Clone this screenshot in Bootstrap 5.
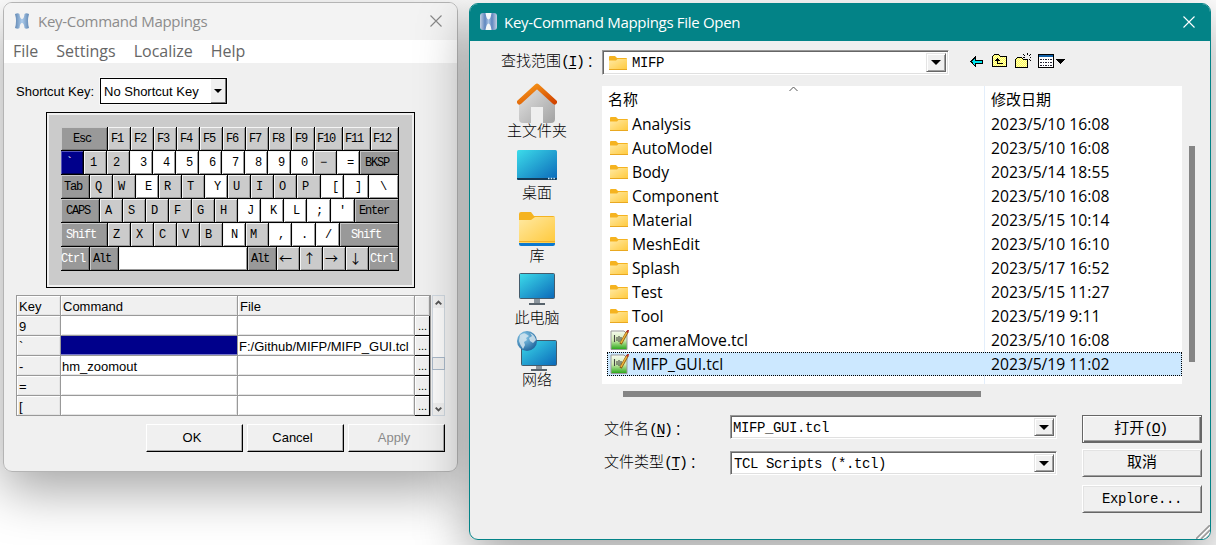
<!DOCTYPE html>
<html lang="zh-CN">
<head>
<meta charset="utf-8">
<meta name="viewport" content="width=device-width, initial-scale=1">
<title>Key-Command Mappings</title>
<link href="https://cdn.jsdelivr.net/npm/bootstrap@5.3.0/dist/css/bootstrap.min.css" rel="stylesheet">
<style>
*{box-sizing:border-box}
body{width:1216px;height:545px;overflow:hidden;background:#fff;color:#000;line-height:1.2}
svg{display:block;flex:none}
.segoe{font-family:"Open Sans","Noto Sans CJK SC",sans-serif}
.arial{font-family:"Liberation Sans",Arial,sans-serif;font-size:13px}
.song{font-family:"Liberation Mono","Noto Sans CJK SC",monospace;font-size:15px;font-weight:300}
.mono{font-family:"Liberation Mono",monospace;font-size:14px;letter-spacing:-.4px}
.win{border-radius:9px;overflow:hidden;background:#f0f0f0;flex:none}
.wrap1,.wrap2{border-radius:9px;box-shadow:0 18px 52px rgba(0,0,0,.36);flex:none}
.wrap1{margin:2px 0 0 3px;height:470px}
.wrap2{margin:3px 0 0 11px;height:537px}
.win1{width:455px;height:470px;border:1px solid #b4b4b4}
.win2{width:742px;height:537px;border:1px solid #038387;background:#efefef}
.title1{height:37px;background:#f3f3f3;color:#8c8c8c;font-size:15px;letter-spacing:-.3px;padding:0 15px 2px 11px}
.title2{height:37px;background:#038387;color:#fff;font-size:15px;letter-spacing:-.3px;padding:0 15px 2px 10px}
.menu{height:23px;background:#fff;color:#666;font-size:16px;padding-left:9px;gap:18px}
.short{height:26px;margin:15px 0 0 12px}
.pick{width:127px;height:26px;border:1px solid #000;background:#fff;outline:1px solid #f8f8f8}
.pick i{width:15px;height:24px;background:#f0f0f0;border-right:1px solid #777;border-bottom:1px solid #777}
.tri{width:0;height:0;border:4px solid transparent;border-top-color:#000;border-bottom:0}
.board{width:369px;height:176px;margin:8px 0 0 42px;border:1px solid #000;background:#cbcbcb;box-shadow:inset 0 0 0 2px #f0f0f0;padding:14px 0 0 14px}
.krow{height:24px;width:338px}
.key{height:24px;flex:none;overflow:hidden;background:#cbcbcb;border-right:1px solid #000;border-bottom:1px solid #000;box-shadow:inset 1px 1px #f4f4f4,inset -1px -1px #999;font-family:"Liberation Mono",monospace;font-size:12px;letter-spacing:-1.2px;line-height:25px;white-space:pre;text-align:left}
.key.w{background:#fff}.key.d{background:#999;box-shadow:inset 1px 1px #c9c9c9,inset -1px -1px #777}
.key.b{background:#00008b;color:#fff;box-shadow:inset 1px 1px #5555bb,inset -1px -1px #000050}
.key.s{color:#fff}
.key.a{font-family:"Noto Sans CJK SC",sans-serif;font-size:13px;letter-spacing:0;line-height:21px}
.grid5{width:415px;height:121px;border:1px solid #999;display:grid;grid-template-columns:44px 177px 177px 15px;grid-template-rows:20px repeat(5,20px);line-height:21px}
.grid5>div{border-right:1px solid #999;border-bottom:1px solid #999;box-shadow:inset 1px 1px #fff,inset -1px -1px #e4e4e4;padding-left:2px;white-space:nowrap;overflow:hidden}
.grid5 .c{background:#fff;padding-left:1px}
.grid5 .sel{background:#00008b;box-shadow:inset 0 -1px #7777cc}
.grid5 .dots{border-color:#000;padding-left:3px;font-size:11px}
.sb{width:13px;height:121px;border:1px solid #d0d8e0;background:#fbfbfb}
.sb .e{height:12px;background:#f0f0f0}
.sb .thumb{height:13px;border:1px solid #a9b8c8;background:#f0f0f0;width:13px;margin-left:-1px}
.push{width:97px;height:28px;border:1px solid #fff;border-right:1px solid #000;border-bottom:1px solid #000;box-shadow:inset -1px -1px #aaa;background:#f0f0f0;padding:0 0 1px;border-radius:0;color:#000}
.combo{border:1px solid #999;border-right-color:#fff;border-bottom-color:#fff;box-shadow:inset 1px 1px #666,inset -1px -1px #e0e0e0;background:#fff;padding:2px}
.combo .mono{padding-top:2px}
.combo i{width:20px;align-self:stretch;background:#f0f0f0;border:1px solid #e4e4e4;border-right-color:#666;border-bottom-color:#666;box-shadow:inset 1px 1px #fff,inset -1px -1px #a0a0a0}
.tri5{width:0;height:0;border:5px solid transparent;border-top-color:#000;border-bottom:0}
.look{height:25px;margin-top:9px;padding-left:31px}
.side{width:134px;line-height:16px}
.side span{transform:translateY(2px)}
.lt{letter-spacing:-1.5px;margin-right:3px}
.list{width:580px;height:298px;background:#fff;font-size:15px}
.lrow{height:24px;padding-left:8px;font-size:15.7px}
.lrow .nm{width:359px;white-space:nowrap}
.names{width:383px;height:298px;border-right:1px solid #e3eefb;padding:4px 0 0 6px}
.on{background:#cce8ff;margin-left:5px;padding-left:3px;outline:1px dotted #000;outline-offset:-1px}
.vsb{width:6px;height:216px;background:#858585;margin:71px 0 0 7px}
.hsb{width:358px;height:6px;background:#858585;margin:7px 0 0 153px}
.frow{height:24px}
.lab{width:126px}
.wbtn{width:120px;height:28px;border:1px solid #fff;border-right-color:#666;border-bottom-color:#666;box-shadow:inset 1px 1px #e3e3e3,inset -1px -1px #a0a0a0;background:#f0f0f0;color:#000;padding:1px 0 0;border-radius:0}
.wbtn.def{border-color:#666;box-shadow:inset 1px 1px #fff,inset -1px -1px #666,inset -2px -2px #a0a0a0}
u{text-underline-offset:2px;text-decoration-thickness:1px}
</style>
</head>
<body>
<svg width="0" height="0" class="position-absolute">
<defs>
<linearGradient id="gf" x1="0" y1="0" x2="1" y2="1"><stop stop-color="#ffe9a3"/><stop offset="1" stop-color="#ffc93b"/></linearGradient>
<linearGradient id="gs" x1="0" y1="0" x2="1" y2="1"><stop stop-color="#3cdcea"/><stop offset="1" stop-color="#0b68b9"/></linearGradient>
<linearGradient id="gh" x1="0" y1="0" x2="1" y2="1"><stop stop-color="#e6e6e6"/><stop offset="1" stop-color="#a2a2a2"/></linearGradient>
<linearGradient id="gr" x1="0" y1="0" x2="1" y2="1"><stop stop-color="#f99d1c"/><stop offset="1" stop-color="#d24500"/></linearGradient>
<linearGradient id="gg" x1="0" y1="0" x2="0" y2="1"><stop stop-color="#f6faf0"/><stop offset=".5" stop-color="#d0ecb0"/><stop offset="1" stop-color="#25a515"/></linearGradient>
<radialGradient id="gw" cx=".35" cy=".3" r=".8"><stop stop-color="#8fd0ee"/><stop offset="1" stop-color="#175c96"/></radialGradient>
<linearGradient id="gx" x1="0" y1="0" x2="1" y2="0"><stop stop-color="#3f6fa5"/><stop offset=".5" stop-color="#9dc3ea"/><stop offset="1" stop-color="#3f6fa5"/></linearGradient>
<linearGradient id="gy" x1="0" y1="0" x2="1" y2="0"><stop stop-color="#c3cfe2"/><stop offset=".3" stop-color="#5f86bf"/><stop offset=".5" stop-color="#a9c4e6"/><stop offset=".7" stop-color="#5f86bf"/><stop offset="1" stop-color="#c3cfe2"/></linearGradient>
<pattern id="dy" width="2" height="2" patternUnits="userSpaceOnUse"><rect width="2" height="2" fill="#ffff50"/><rect width="1" height="1" fill="#fffbc0"/><rect x="1" y="1" width="1" height="1" fill="#fffbc0"/></pattern>
<symbol id="folder" viewBox="0 0 18 14"><path d="M0 1Q0 0 1 0H6L8 2H17Q18 2 18 3V6H0Z" fill="#f5b320"/><path d="M0 4.500H7L8.500 3H18V13Q18 14 17 14H1Q0 14 0 13Z" fill="url(#gf)"/><path d="M0 13.500H18" stroke="#e9a820"/></symbol>
<symbol id="tcl" viewBox="0 0 19 20"><path d="M1 1H14L17 4V19.500H1Z" fill="url(#gg)" stroke="#999"/><path d="M4.500 5V12M7 7V11M9 6V12M11 7V11" fill="none" stroke="#444" stroke-width="1.100"/><path d="M17.500 1.500L10.500 14" stroke="#8a5a10" stroke-width="2.600"/><path d="M17 2L11 13" stroke="#f0b43c" stroke-width="1.500"/><path d="M18.500 0L17 2.500" stroke="#b0312a" stroke-width="2"/></symbol>
</defs></svg>

<main class="d-flex align-items-start">
<section class="wrap1"><div class="win win1 d-flex flex-column">
  <header class="title1 segoe d-flex align-items-center">
    <svg width="14" height="16" viewBox="0 0 14 16"><path d="M0 1Q3-.5 4.500 1Q5 6 7 6T9.500 1Q11-.5 14 1Q12 8 14 15Q11 16.500 9.500 15Q9 10 7 10T4.500 15Q3 16.500 0 15Q2 8 0 1Z" fill="url(#gx)" opacity=".8"/></svg>
    <span style="margin-left:9px">Key-Command Mappings</span>
    <svg class="ms-auto" width="12" height="12" viewBox="0 0 12 12"><path d="M.5.5L11.500 11.500M11.500.5L.5 11.500" stroke="#888" stroke-width="1.100"/></svg>
  </header>
  <nav class="menu segoe d-flex align-items-center"><span>File</span><span>Settings</span><span>Localize</span><span>Help</span></nav>
  <div class="short arial d-flex align-items-center"><span style="width:84px;padding-top:1px">Shortcut Key:</span>
    <div class="pick d-flex align-items-center justify-content-between"><span style="padding:2px 0 0 3px">No Shortcut Key</span><i class="d-flex align-items-center justify-content-center"><b class="tri"></b></i></div></div>
  <div class="board" id="board"></div>
  <div class="d-flex arial" style="margin:7px 0 0 12px;gap:1px">
    <div class="grid5">
      <div>Key</div><div>Command</div><div>File</div><div></div>
      <div>9</div><div class="c"></div><div class="c"></div><div class="dots">...</div>
      <div>`</div><div class="c sel"></div><div class="c">F:/Github/MIFP/MIFP_GUI.tcl</div><div class="dots">...</div>
      <div>-</div><div class="c">hm_zoomout</div><div class="c"></div><div class="dots">...</div>
      <div>=</div><div class="c"></div><div class="c"></div><div class="dots">...</div>
      <div>[</div><div class="c"></div><div class="c"></div><div class="dots">...</div>
    </div>
    <div class="sb d-flex flex-column">
      <div class="e d-flex align-items-center justify-content-center"><svg width="7" height="5" viewBox="0 0 7 5"><path d="M.7 4.300L3.500 1.500L6.300 4.300" fill="none" stroke="#555" stroke-width="1.900"/></svg></div>
      <div class="thumb" style="margin-top:49px"></div>
      <div class="e mt-auto d-flex align-items-center justify-content-center"><svg width="7" height="5" viewBox="0 0 7 5"><path d="M.7.7L3.500 3.500L6.300.7" fill="none" stroke="#555" stroke-width="1.900"/></svg></div>
    </div>
  </div>
  <div class="d-flex arial" style="margin:8px 0 0 142px;gap:4px">
    <button class="push" style="padding-right:5px">OK</button><button class="push" style="padding-right:6px">Cancel</button><button class="push" style="color:#8a8a8a;padding-right:5px">Apply</button>
  </div>
</div></section>

<section class="wrap2"><div class="win win2 position-relative">
  <header class="title2 segoe d-flex align-items-center">
    <svg width="17" height="17" viewBox="0 0 17 17"><rect width="17" height="17" rx="3" fill="url(#gy)"/><path d="M5.500 0Q6.500 6.500 8.500 6.500T11.500 0ZM5.500 17Q6.500 10.500 8.500 10.500T11.500 17Z" fill="#f3f6f8"/></svg>
    <span style="margin-left:7px">Key-Command Mappings File Open</span>
    <svg class="ms-auto" width="12" height="12" viewBox="0 0 12 12"><path d="M.5.5L11.500 11.500M11.500.5L.5 11.500" stroke="#fff" stroke-width="1.100"/></svg>
  </header>
  <div class="look d-flex align-items-center">
    <span class="song text-nowrap" style="width:101px">查找范围<span class="lt">(<u>I</u>)</span>：</span>
    <div class="combo d-flex align-items-center" style="width:347px;height:25px"><svg width="18" height="14" style="margin-left:4px"><use href="#folder"/></svg><span class="mono flex-fill" style="margin-left:5px">MIFP</span><i class="d-flex align-items-center justify-content-center"><b class="tri5"></b></i></div>
    <svg width="96" height="20" viewBox="0 0 96 20" style="margin:-1px 0 0 21px" shape-rendering="crispEdges">
      <path d="M1 9.500L5.500 5V8H12.500V11.500H5.500V14.500Z" fill="#00e5ee" stroke="#000"/>
      <path d="M22.500 4.500L24.500 2.500H28.500L30.500 4.500H36.500V14.500H22.500Z" fill="url(#dy)" stroke="#000"/><path d="M27.500 12V6M25 8.500H30M26 7.500H29M27.500 11.500H33" stroke="#000" fill="none"/>
      <path d="M45.500 7.500L47.500 5.500H51.500L53.500 7.500H57.500V15.500H45.500Z" fill="url(#dy)" stroke="#000"/><path d="M57.500 1V3M57.500 7V9M53 2L55 4M61 2L59 4M53 5.500H55M59.500 5.500H61M59 7L61 9" stroke="#000" fill="none"/>
      <rect x="68.500" y="2.500" width="15" height="13" fill="#fff" stroke="#000"/><rect x="69" y="3" width="14" height="2" fill="#1060a8"/><path d="M70 7.500H82M70 10.500H82M70 13.500H82" stroke="#223" stroke-width="1" stroke-dasharray="2 1 1 1"/>
      <path d="M86 7H95L90.500 12Z" fill="#000"/>
    </svg>
  </div>
  <div class="d-flex" style="height:309px">
    <div class="side song d-flex flex-column align-items-center text-nowrap">
      <svg width="40" height="40" viewBox="0 0 40 40" style="margin-top:8px"><path d="M2 18L20 3L38 18V36Q38 40 34 40H26V24H14V40H6Q2 40 2 36Z" fill="url(#gh)"/><path d="M14 40V26Q14 24 16 24H24Q26 24 26 26V40Z" fill="#efefef"/><path d="M2.500 19L20 3L37.500 19" fill="none" stroke="url(#gr)" stroke-width="5" stroke-linecap="round" stroke-linejoin="round"/></svg>
      <span>主文件夹</span>
      <svg width="40" height="30" viewBox="0 0 40 30" style="margin-top:11px"><rect width="40" height="30" rx="1.500" fill="url(#gs)"/><path d="M0 28H40V28.500Q40 30 38.500 30H1.500Q0 30 0 28.500Z" fill="#153b58"/><path d="M31 28.500H38" stroke="#c8eaff" stroke-width="1.500" stroke-dasharray="1.500 1.200"/></svg>
      <span style="margin-top:5px">桌面</span>
      <svg width="36" height="34" viewBox="0 0 36 34" style="margin-top:11px"><path d="M0 2Q0 0 2 0H12L15 4H34Q36 4 36 6V10H0Z" fill="#f5b320"/><path d="M0 8H12L16 5H36V31H0Z" fill="url(#gf)"/><path d="M0 29.500H36" stroke="#efb02b"/><path d="M0 31H36V32Q36 34 34 34H2Q0 34 0 32Z" fill="#0b78cf"/></svg>
      <span style="margin-top:2px">库</span>
      <svg width="36" height="32" viewBox="0 0 36 32" style="margin-top:9px"><rect x=".5" y=".5" width="35" height="25" rx="1" fill="url(#gs)" stroke="#455b6b"/><path d="M15 26H21V30H15Z" fill="#8b959d"/><path d="M10 31H26" stroke="#58636c" stroke-width="2"/></svg>
      <span style="margin-top:5px">此电脑</span>
      <svg width="40" height="40" viewBox="0 0 40 40" style="margin-top:5px"><rect x="4.500" y="9.500" width="35" height="25" rx="1" fill="url(#gs)" stroke="#455b6b"/><path d="M19 35H25V38H19Z" fill="#8b959d"/><path d="M14 39H30" stroke="#58636c" stroke-width="2"/><circle cx="10" cy="10" r="10" fill="url(#gw)"/><path d="M3 4Q7 1 9 3L12 5L9 7L10 9L7 11L8 14L6 18Q3 14 2 10ZM13 2Q18 4 19 9L16 12L13 10L12 7L15 5Z" fill="#d4e4ed" opacity=".85"/></svg>
      <span style="margin-top:1px">网络</span>
    </div>
    <div style="margin:11px 0 0 -2px">
      <div class="list segoe position-relative">
        <svg class="position-absolute" width="9" height="6" viewBox="0 0 9 6" style="left:187px;top:0"><path d="M.5 5L4.500 1L8.500 5" fill="none" stroke="#555"/></svg>
        <div class="d-flex" style="height:26px"><div class="names">名称</div><div style="padding:4px 0 0 6px">修改日期</div></div>
        <div id="rows" class="position-relative"></div>
      </div>
    </div>
    <div class="vsb"></div>
  </div>
  <div class="hsb"></div>
  <div class="d-flex" style="margin:18px 0 0 134px">
    <div class="d-flex flex-column" style="gap:12px">
      <div class="frow d-flex align-items-center"><span class="lab song" style="padding-top:8px">文件名<span class="lt">(<u>N</u>)</span>：</span><div class="combo d-flex align-items-center" style="width:327px;height:24px"><span class="mono flex-fill">MIFP_GUI.tcl</span><i class="d-flex align-items-center justify-content-center"><b class="tri5"></b></i></div></div>
      <div class="frow d-flex align-items-center"><span class="lab song" style="padding-top:1px">文件类型<span class="lt">(<u>T</u>)</span>：</span><div class="combo d-flex align-items-center" style="width:327px;height:24px"><span class="mono flex-fill" style="padding-left:1px">TCL Scripts (*.tcl)</span><i class="d-flex align-items-center justify-content-center"><b class="tri5"></b></i></div></div>
    </div>
    <div class="d-flex flex-column song" style="margin-left:25px;gap:6px"><button class="wbtn def">打开<span class="lt">(<u>O</u>)</span></button><button class="wbtn">取消</button><button class="wbtn mono" style="margin-top:2px">Explore...</button></div>
  </div>
  <svg class="position-absolute bottom-0 end-0" width="14" height="14" viewBox="0 0 14 14"><path d="M0 14L14 0M5 14L14 5M10 14L14 10" stroke="#999" stroke-width="1.600"/><path d="M2 14L14 2M7 14L14 7" stroke="#fff"/></svg>
</div></section>
</main>
<script src="https://cdn.jsdelivr.net/npm/bootstrap@5.3.0/dist/js/bootstrap.bundle.min.js"></script>
<script>
// Each key: label, right edge on the board, text indent, colour class
const keys = [
 [["Esc",108,12,"d"],["F1",131,3],["F2",154,3],["F3",177,3],["F4",200,3],["F5",223,3],["F6",246,3],["F7",269,3],["F8",292,3],["F9",315,3],["F10",343,2],["F11",371,2],["F12",399,2]],
 [["`",84,5,"b"],["1",107,6],["2",130,6],["3",153,10,"w"],["4",176,10,"w"],["5",199,10,"w"],["6",222,10,"w"],["7",245,10,"w"],["8",268,10,"w"],["9",291,10,"w"],["0",314,10,"w"],["−",337,6],["=",360,10,"w"],["BKSP",399,5,"d"]],
 [["Tab",90,3,"d"],["Q",113,5],["W",136,5],["E",159,9,"w"],["R",182,5],["T",205,5],["Y",228,9,"w"],["U",251,5],["I",274,5],["O",297,5],["P",321,5],["[",344,11,"w"],["]",369,11,"w"],["\\",399,11,"w"]],
 [["CAPS",100,5,"d"],["A",123,5],["S",146,5],["D",169,5],["F",192,5],["G",215,5],["H",238,5],["J",261,9,"w"],["K",284,9,"w"],["L",307,9,"w"],[";",331,9,"w"],["′",355,8,"w"],["Enter",399,4,"d"]],
 [["Shift",108,5,"d s"],["Z",131,5],["X",154,5],["C",177,5],["V",200,5],["B",223,5],["N",246,8,"w"],["M",269,4],[",",292,9,"w"],[".",316,9,"w"],["/",340,9,"w"],["Shift",399,11,"d s"]],
 [["Ctrl",90,0,"d s"],["Alt",119,3,"d"],["",248,0,"w"],["Alt",277,3,"d"],["←",300,2,"a"],["↑",323,3,"a"],["→",346,2,"a"],["↓",369,3,"a"],["Ctrl",399,1,"d s"]]
];
const board = document.getElementById("board");
for (const r of keys) {
  const row = document.createElement("div"); row.className = "krow d-flex";
  let x = 61;
  for (const [t, e, p, c] of r) {
    const k = document.createElement("div");
    k.className = "key " + (c || ""); k.style.width = (e - x) + "px"; k.style.paddingLeft = p + "px";
    k.textContent = t; row.append(k); x = e;
  }
  board.append(row);
}
const files = [["Analysis","2023/5/10 16:08"],["AutoModel","2023/5/10 16:08"],["Body","2023/5/14 18:55"],["Component","2023/5/10 16:08"],["Material","2023/5/15 10:14"],["MeshEdit","2023/5/10 16:10"],["Splash","2023/5/17 16:52"],["Test","2023/5/15 11:27"],["Tool","2023/5/19 9:11"],["cameraMove.tcl","2023/5/10 16:08"],["MIFP_GUI.tcl","2023/5/19 11:02"]];
document.getElementById("rows").innerHTML = files.map(([n, d], i) => {
  const f = n.endsWith(".tcl");
  return `<div class="lrow d-flex align-items-center ${i === 10 ? "on" : ""}"><svg width="${f ? 19 : 18}" height="${f ? 20 : 14}" style="margin-right:${f ? 3 : 4}px"><use href="#${f ? "tcl" : "folder"}"/></svg><span class="nm">${n}</span><span>${d}</span></div>`;
}).join("");
</script>
</body>
</html>
